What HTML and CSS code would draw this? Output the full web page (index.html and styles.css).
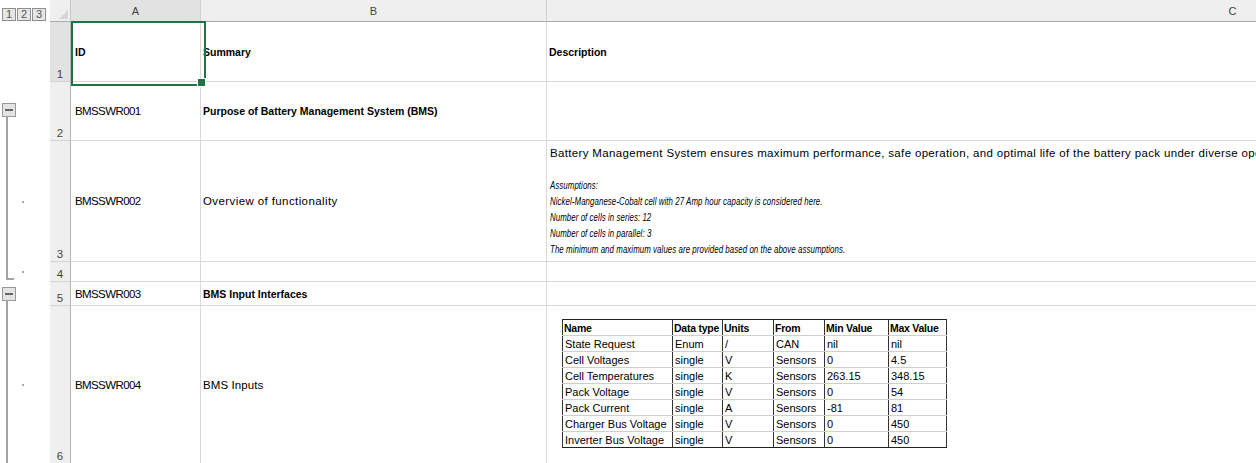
FILE: index.html
```html
<!DOCTYPE html>
<html>
<head>
<meta charset="utf-8">
<link rel="stylesheet" href="styles.css">
</head>
<body>
<div class="sheet">
  <!-- header row -->
  <div class="levels"><span class="lvl">1</span><span class="lvl">2</span><span class="lvl">3</span></div>
  <div class="corner"><span class="corner-tri"></span></div>
  <div class="colhead active">A</div>
  <div class="colhead">B</div>
  <div class="colhead">C</div>

  <!-- row 1 -->
  <div class="gutter"></div>
  <div class="rowhead active">1</div>
  <div class="cell ca bold selected">ID</div>
  <div class="cell cb bold">Summary</div>
  <div class="cell cc bold">Description</div>

  <!-- row 2 -->
  <div class="gutter g-start"><span class="minus"><span class="bar"></span></span><span class="vline grow"></span></div>
  <div class="rowhead">2</div>
  <div class="cell ca id">BMSSWR001</div>
  <div class="cell cb bold">Purpose of Battery Management System (BMS)</div>
  <div class="cell cc"></div>

  <!-- row 3 -->
  <div class="gutter g-mid"><span class="vline"></span><span class="dot"></span></div>
  <div class="rowhead">3</div>
  <div class="cell ca id">BMSSWR002</div>
  <div class="cell cb txt">Overview of functionality</div>
  <div class="cell cc">
    <div class="desc">
      <div class="line txt3">Battery Management System ensures maximum performance, safe operation, and optimal life of the battery pack under diverse operating conditions.</div>
      <div class="line blank"></div>
      <div class="it-block">
        <div class="line it">Assumptions:</div>
        <div class="line it">Nickel-Manganese-Cobalt cell with 27 Amp hour capacity is considered here.</div>
        <div class="line it">Number of cells in series: 12</div>
        <div class="line it">Number of cells in parallel: 3</div>
        <div class="line it">The minimum and maximum values are provided based on the above assumptions.</div>
      </div>
    </div>
  </div>

  <!-- row 4 -->
  <div class="gutter g-end"><span class="elbow"></span><span class="dot dot-end"></span></div>
  <div class="rowhead">4</div>
  <div class="cell ca"></div>
  <div class="cell cb"></div>
  <div class="cell cc"></div>

  <!-- row 5 -->
  <div class="gutter g-start2"><span class="minus"><span class="bar"></span></span><span class="vline grow"></span></div>
  <div class="rowhead">5</div>
  <div class="cell ca id">BMSSWR003</div>
  <div class="cell cb bold">BMS Input Interfaces</div>
  <div class="cell cc"></div>

  <!-- row 6 -->
  <div class="gutter g-mid"><span class="vline"></span><span class="dot"></span></div>
  <div class="rowhead">6</div>
  <div class="cell ca id">BMSSWR004</div>
  <div class="cell cb txt2">BMS Inputs</div>
  <div class="cell cc cell-top">
    <table class="io">
      <colgroup>
        <col class="c1"><col class="c2"><col class="c3"><col class="c4"><col class="c5"><col class="c6">
      </colgroup>
      <tr class="th"><td>Name</td><td>Data type</td><td>Units</td><td>From</td><td>Min Value</td><td>Max Value</td></tr>
      <tr><td>State Request</td><td>Enum</td><td>/</td><td>CAN</td><td>nil</td><td>nil</td></tr>
      <tr><td>Cell Voltages</td><td>single</td><td>V</td><td>Sensors</td><td>0</td><td>4.5</td></tr>
      <tr><td>Cell Temperatures</td><td>single</td><td>K</td><td>Sensors</td><td>263.15</td><td>348.15</td></tr>
      <tr><td>Pack Voltage</td><td>single</td><td>V</td><td>Sensors</td><td>0</td><td>54</td></tr>
      <tr><td>Pack Current</td><td>single</td><td>A</td><td>Sensors</td><td>-81</td><td>81</td></tr>
      <tr><td>Charger Bus Voltage</td><td>single</td><td>V</td><td>Sensors</td><td>0</td><td>450</td></tr>
      <tr><td>Inverter Bus Voltage</td><td>single</td><td>V</td><td>Sensors</td><td>0</td><td>450</td></tr>
    </table>
  </div>
</div>
</body>
</html>
```

FILE: styles.css
```css
* { box-sizing: border-box; }
html, body { margin: 0; padding: 0; background: #fff; overflow: hidden; }
body { font-family: "Liberation Sans", Arial, sans-serif; color: #000; }

.sheet {
  display: grid;
  grid-template-columns: 50px 21px 130px 346px 1372px;
  grid-template-rows: 22px 60px 59px 121px 20px 24px 158px;
  width: 1920px;
}

/* outline level buttons */
.levels {
  display: flex;
  align-items: flex-start;
  gap: 1px;
  padding: 8px 0 0 2px;
  background: #fff;
}
.lvl {
  width: 14px;
  height: 13px;
  border: 1px solid #8f8f8f;
  background: #e6e6e6;
  color: #555;
  font-size: 11px;
  line-height: 11px;
  text-align: center;
}

.corner {
  background: #efefef;
  border-right: 1px solid #c8c8c8;
  border-bottom: 1px solid #ababab;
  display: flex;
  align-items: flex-end;
  justify-content: flex-end;
  padding: 0 2px 2px 0;
}
.corner-tri {
  width: 0;
  height: 0;
  border-left: 9px solid transparent;
  border-bottom: 9px solid #d6d6d6;
}

.colhead {
  background: #efefef;
  border-right: 1px solid #d0d0d0;
  border-bottom: 1px solid #ababab;
  color: #444;
  font-size: 11px;
  display: flex;
  align-items: center;
  justify-content: center;
  padding-top: 1px;
}
.colhead.active { background: #e2e2e2; }

.rowhead {
  background: #efefef;
  border-right: 1px solid #b4b4b4;
  border-bottom: 1px solid #d4d4d4;
  color: #444;
  font-size: 11.5px;
  display: flex;
  align-items: flex-end;
  justify-content: center;
  padding-bottom: 1px;
}
.rowhead.active { background: #e2e2e2; }

.cell {
  border-right: 1px solid #d9d9d9;
  border-bottom: 1px solid #d9d9d9;
  display: flex;
  align-items: center;
  font-size: 11.5px;
  white-space: nowrap;
  overflow: hidden;
  position: relative;
}
.cell.ca { padding-left: 4px; }
.cell.cb { padding-left: 2px; }
.cell.cc { padding-left: 3px; }
.cell.cc.bold { padding-left: 2px; }
.cell.bold { font-weight: bold; font-size: 10.5px; }
.cell.id { letter-spacing: -0.6px; }
.txt { letter-spacing: 0.4px; }
.txt2 { letter-spacing: 0.1px; }
.txt3 { letter-spacing: 0.34px; }

.cell.selected { overflow: visible; z-index: 2; }
.cell.selected::after {
  content: "";
  position: absolute;
  left: 0;
  top: -1px;
  width: 131px;
  height: 61px;
  border: 2px solid #217346;
}
.cell.selected::before {
  content: "";
  position: absolute;
  left: 126px;
  top: 56px;
  width: 7px;
  height: 7px;
  background: #217346;
  border: 1px solid #fff;
  z-index: 3;
}
.cell-top {
  align-items: flex-start;
  padding: 13px 0 0 15px !important;
}

/* description */
.desc { line-height: 16px; }
.line { height: 16px; }
.it-block {
  transform: scaleX(0.715);
  transform-origin: left center;
}
.line.it {
  font-style: italic;
  font-size: 11px;
  letter-spacing: 0.1px;
}

/* outline gutter */
.gutter { display: flex; background: #fff; }
.g-start { flex-direction: column; padding: 21px 0 0 2px; }
.g-start2 { flex-direction: column; padding: 5px 0 0 2px; }
.minus {
  width: 14px;
  height: 14px;
  border: 1px solid #9a9a9a;
  background: #e4e4e4;
  display: flex;
  align-items: center;
  justify-content: center;
  flex: none;
}
.minus .bar { width: 8px; height: 2px; background: #666; }
.vline { width: 2px; background: #a3a3a3; margin-left: 6px; align-self: stretch; }
.g-start .vline, .g-start2 .vline { margin-left: 4px; flex: 1; }
.g-mid { align-items: center; }
.dot { width: 2px; height: 2px; background: #a8a8a8; margin-left: 14px; }
.g-end { align-items: flex-start; }
.elbow {
  width: 8px;
  height: 18px;
  margin-left: 6px;
  border-left: 2px solid #a3a3a3;
  border-bottom: 2px solid #a3a3a3;
}
.dot-end { margin-left: 8px; margin-top: 9px; }

/* embedded table image */
.io {
  border-collapse: collapse;
  table-layout: fixed;
  width: 384px;
  border: 1px solid #222;
  font-size: 11px;
}
.io col.c1 { width: 110px; }
.io col.c2 { width: 50px; }
.io col.c3 { width: 51px; }
.io col.c4 { width: 51px; }
.io col.c5 { width: 64px; }
.io col.c6 { width: 58px; }
.io td {
  height: 16px;
  padding: 0 0 0 2px;
  border-left: 1px solid #333;
  border-right: 1px solid #333;
  border-bottom: 1px solid #cfcfcf;
  line-height: 14px;
  white-space: nowrap;
  overflow: hidden;
}
.io tr.th td { font-weight: bold; font-size: 10.5px; letter-spacing: -0.25px; padding-left: 1px; }
.io tr:last-child td { border-bottom: 1px solid #222; }
```
